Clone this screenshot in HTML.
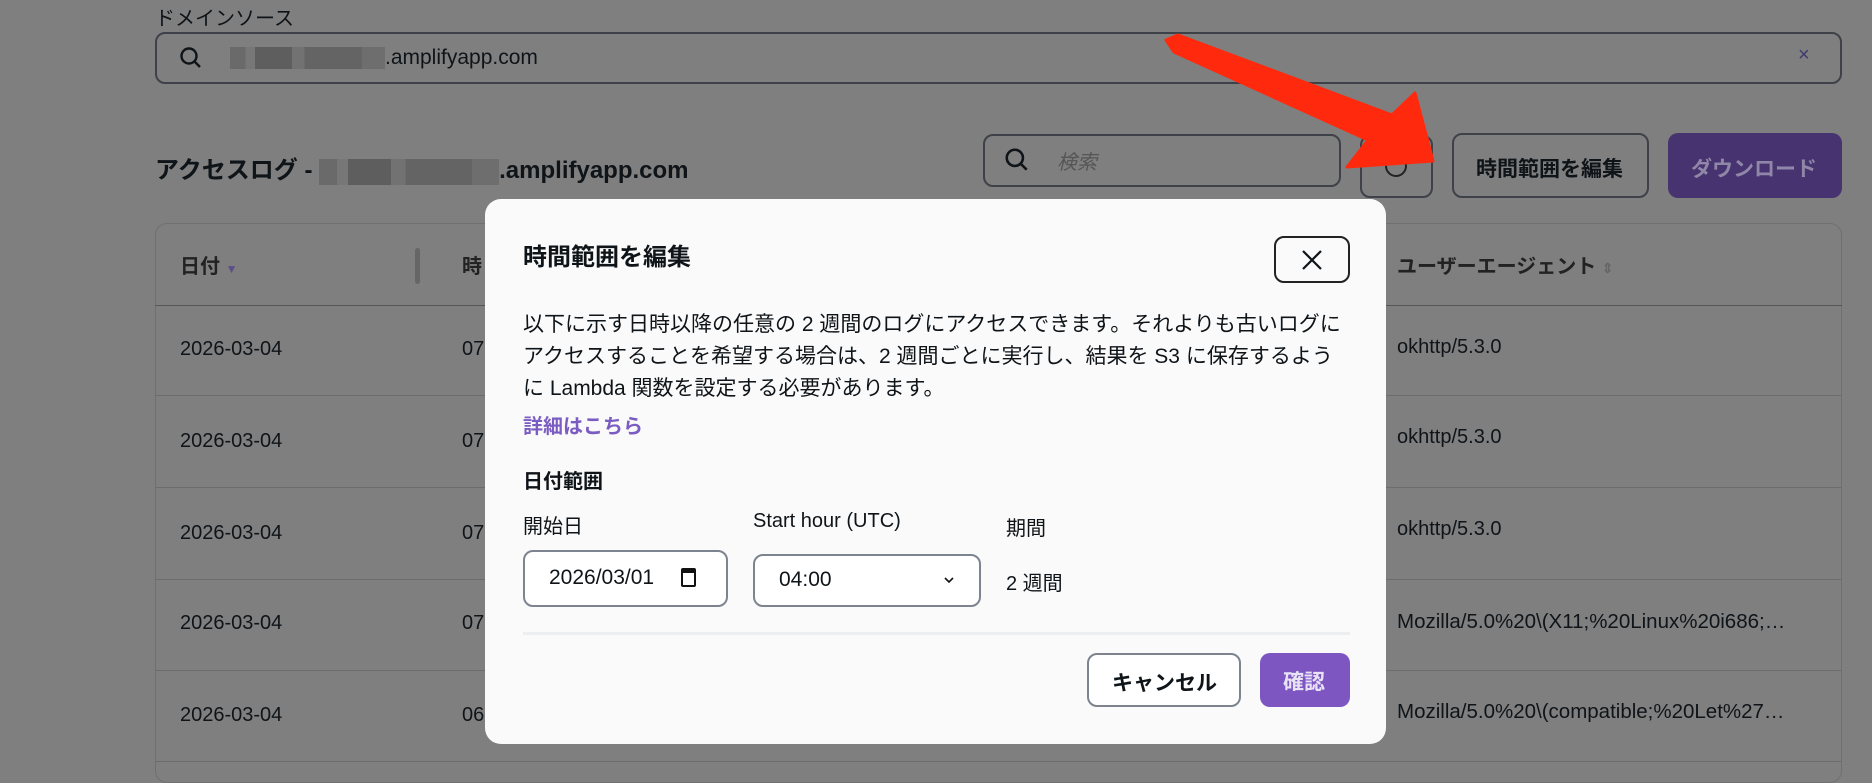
<!DOCTYPE html>
<html><head><meta charset="utf-8"><style>
*{box-sizing:border-box;margin:0;padding:0}
body{width:1872px;height:763px;overflow:hidden;background:#7f7f7f;font-family:"Liberation Sans","Noto Sans CJK JP",sans-serif;color:#0f1418;position:relative}
.a{position:absolute}
.box{position:absolute;border:2px solid #3e4248;border-radius:10px}
.t{position:absolute;font-size:20px;white-space:nowrap}
.blur{display:inline-block;height:22px;background:linear-gradient(90deg,#6a6a6a 0 10%,#777 10% 16%,#5e5e5e 16% 40%,#727272 40% 48%,#646464 48% 85%,#6e6e6e 85%);vertical-align:middle}
.row{position:absolute;left:155px;width:1687px;border-top:1px solid #6c6c6c}
.m{position:absolute;left:485px;top:199px;width:901px;height:545px;background:#fafafa;border-radius:16px}
.mt{position:absolute;white-space:nowrap;color:#0f1418}
</style></head><body>
<div class="t" style="left:155px;top:2px;font-size:20px">ドメインソース</div>
<div class="box" style="left:155px;top:32px;width:1687px;height:52px"></div>
<svg class="a" style="left:178px;top:45px" width="26" height="26" viewBox="0 0 26 26"><circle cx="11" cy="11" r="7.5" fill="none" stroke="#0f1418" stroke-width="2.4"/><path d="M16 16l6 6" stroke="#0f1418" stroke-width="2.4"/></svg>
<div class="t" style="left:230px;top:46px;font-size:21px"><span class="blur" style="width:155px"></span>.amplifyapp.com</div>
<div class="t" style="left:1798px;top:44px;color:#3e3a6e;font-size:20px">×</div>

<div class="t" style="left:155px;top:150px;font-size:24px;font-weight:bold">アクセスログ - <span class="blur" style="width:180px;height:26px"></span>.amplifyapp.com</div>
<div class="box" style="left:983px;top:134px;width:358px;height:53px"></div>
<svg class="a" style="left:1003px;top:146px" width="28" height="28" viewBox="0 0 26 26"><circle cx="11" cy="11" r="7.5" fill="none" stroke="#0f1418" stroke-width="2.4"/><path d="M16 16l6 6" stroke="#0f1418" stroke-width="2.4"/></svg>
<div class="t" style="left:1057px;top:146px;color:#555;font-style:italic">検索</div>
<div class="box" style="left:1360px;top:135px;width:73px;height:63px"></div>
<div class="a" style="left:1385px;top:155px;width:22px;height:22px;border:2px solid #222;border-radius:50%"></div>
<div class="box" style="left:1452px;top:133px;width:197px;height:65px"></div>
<div class="t" style="left:1476px;top:153px;font-weight:bold;font-size:21px">時間範囲を編集</div>
<div class="a" style="left:1668px;top:133px;width:174px;height:65px;background:#46336f;border-radius:10px"></div>
<div class="t" style="left:1691px;top:153px;font-weight:bold;color:#8f86a8;font-size:21px">ダウンロード</div>

<div class="a" style="left:155px;top:223px;width:1687px;height:560px;border:1px solid #707070;border-radius:12px"></div>
<div class="t" style="left:180px;top:250px;font-weight:bold;color:#222">日付 <span style="color:#5b4e8a;font-size:12px">▼</span></div>
<div class="a" style="left:415px;top:248px;width:5px;height:36px;background:#666;border-radius:3px"></div>
<div class="t" style="left:462px;top:250px;font-weight:bold;color:#222">時</div>
<div class="t" style="left:1397px;top:250px;font-weight:bold;color:#222">ユーザーエージェント <span style="color:#666;font-size:14px">⇕</span></div>
<div class="row" style="top:305px;border-color:#555"></div>
<div class="row" style="top:395px"></div><div class="row" style="top:487px"></div><div class="row" style="top:579px"></div><div class="row" style="top:670px"></div><div class="row" style="top:761px"></div>
<div class="t" style="left:180px;top:338px">2026-03-04</div><div class="t" style="left:462px;top:338px">07</div><div class="t" style="left:1397px;top:336px">okhttp/5.3.0</div>
<div class="t" style="left:180px;top:430px">2026-03-04</div><div class="t" style="left:462px;top:430px">07</div><div class="t" style="left:1397px;top:426px">okhttp/5.3.0</div>
<div class="t" style="left:180px;top:522px">2026-03-04</div><div class="t" style="left:462px;top:522px">07</div><div class="t" style="left:1397px;top:518px">okhttp/5.3.0</div>
<div class="t" style="left:180px;top:612px">2026-03-04</div><div class="t" style="left:462px;top:612px">07</div><div class="t" style="left:1397px;top:610px;font-size:20.5px">Mozilla/5.0%20\(X11;%20Linux%20i686;…</div>
<div class="t" style="left:180px;top:704px">2026-03-04</div><div class="t" style="left:462px;top:704px">06</div><div class="t" style="left:1397px;top:700px;font-size:20.5px">Mozilla/5.0%20\(compatible;%20Let%27…</div>

<div class="m">
<div class="mt" style="left:38px;top:38px;font-size:24px;font-weight:bold">時間範囲を編集</div>
<div class="a" style="left:789px;top:37px;width:76px;height:47px;border:2px solid #222;border-radius:10px;background:#fafafa"></div>
<svg class="a" style="left:815px;top:49px" width="24" height="24" viewBox="0 0 24 24"><path d="M3 3L21 21M21 3L3 21" stroke="#0f1418" stroke-width="2.2"/></svg>
<div class="mt" style="left:38px;top:110px;font-size:21px;line-height:32px">以下に示す日時以降の任意の 2 週間のログにアクセスできます。それよりも古いログに<br>アクセスすることを希望する場合は、2 週間ごとに実行し、結果を S3 に保存するよう<br>に Lambda 関数を設定する必要があります。</div>
<div class="mt" style="left:38px;top:211px;font-size:20px;font-weight:bold;color:#7a5cc2">詳細はこちら</div>
<div class="mt" style="left:38px;top:266px;font-size:20px;font-weight:bold">日付範囲</div>
<div class="mt" style="left:38px;top:311px;font-size:20px">開始日</div>
<div class="mt" style="left:268px;top:311px;font-size:20px">Start hour (UTC)</div>
<div class="mt" style="left:521px;top:313px;font-size:20px">期間</div>
<div class="a" style="left:38px;top:351px;width:205px;height:57px;border:2px solid #7d8490;border-radius:10px;background:#fff"></div>
<div class="mt" style="left:64px;top:367px;font-size:21px">2026/03/01</div>
<div class="a" style="left:196px;top:369px;width:15px;height:19px;border:2px solid #111;border-top-width:5px;border-radius:2px"></div>
<div class="a" style="left:268px;top:355px;width:228px;height:53px;border:2px solid #7d8490;border-radius:10px;background:#fff"></div>
<div class="mt" style="left:294px;top:369px;font-size:21px">04:00</div>
<svg class="a" style="left:458px;top:376px" width="12" height="10" viewBox="0 0 12 10"><path d="M2 3l4 4 4-4" fill="none" stroke="#111" stroke-width="1.6"/></svg>
<div class="mt" style="left:521px;top:368px;font-size:20px">2 週間</div>
<div class="a" style="left:38px;top:433px;width:827px;height:3px;background:#eceef2"></div>
<div class="a" style="left:602px;top:454px;width:154px;height:54px;border:2px solid #7d8490;border-radius:10px;background:#fff"></div>
<div class="mt" style="left:627px;top:468px;font-size:21px;font-weight:bold">キャンセル</div>
<div class="a" style="left:775px;top:454px;width:90px;height:54px;border-radius:10px;background:#7d56c2"></div>
<div class="mt" style="left:798px;top:467px;font-size:21px;font-weight:bold;color:#e8e2f5">確認</div>
</div>

<svg class="a" style="left:0;top:0" width="1872" height="763"><polygon points="1166,40 1174,52 1368,140 1347,167 1433,161 1415,93 1392,115 1178,35" fill="#ff2a0e" stroke="#ff2a0e" stroke-width="3" stroke-linejoin="round"/></svg>
</body></html>
